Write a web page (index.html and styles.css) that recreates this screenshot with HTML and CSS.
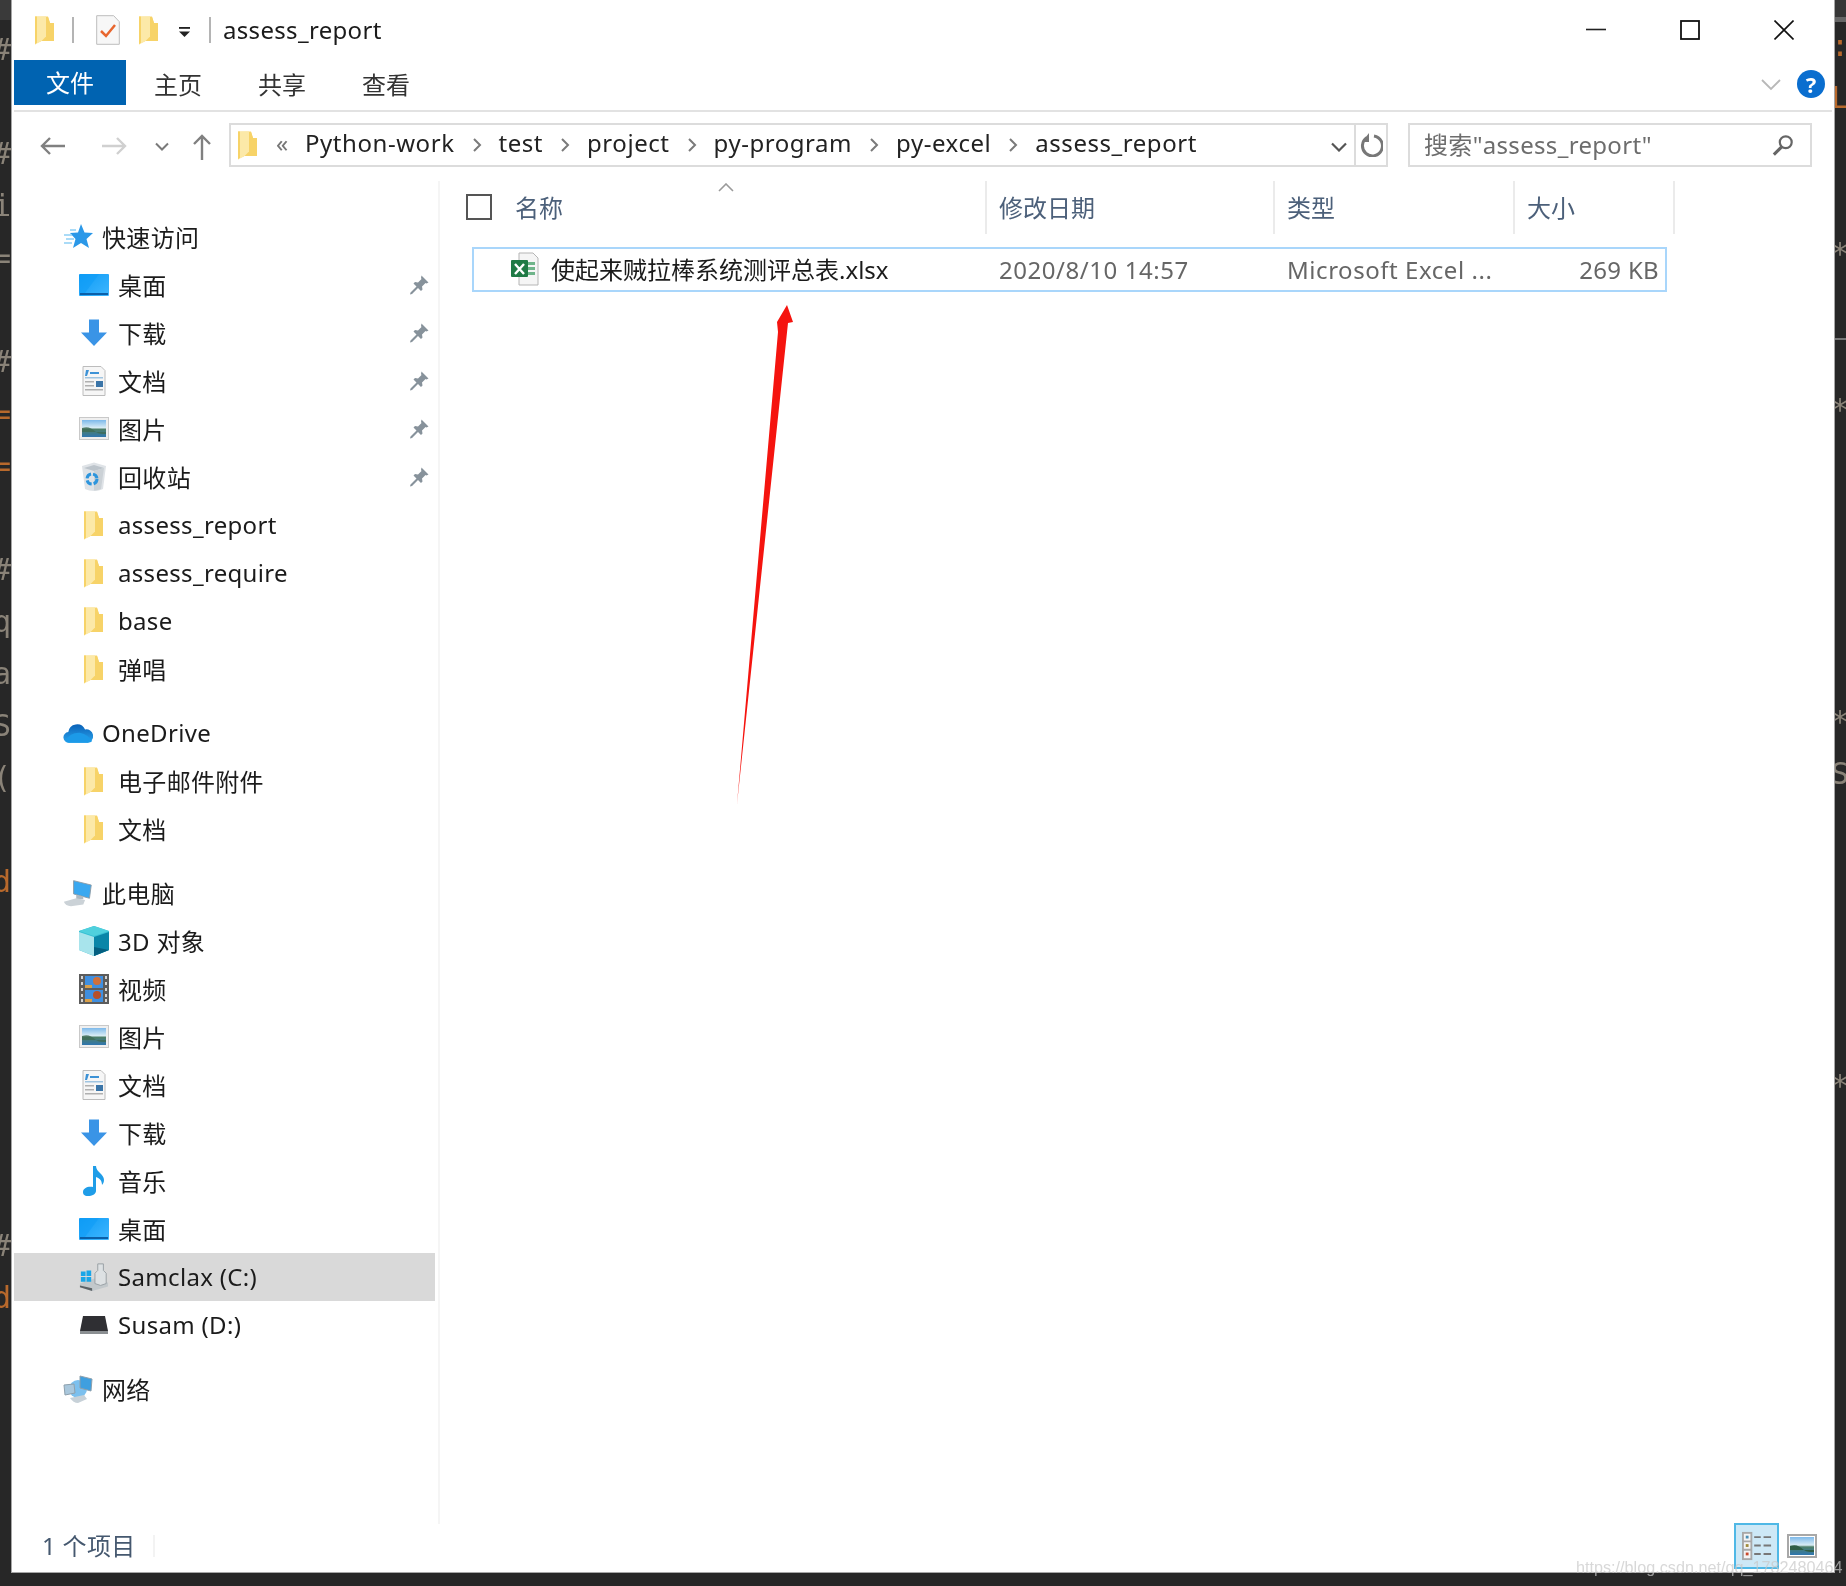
FILE: index.html
```html
<!DOCTYPE html>
<html lang="zh-CN">
<head>
<meta charset="utf-8">
<title>assess_report</title>
<link rel="stylesheet" href="styles.css">
</head>
<body>
<svg class="sprite" width="0" height="0" aria-hidden="true">
  <defs>
    <linearGradient id="gFolder" x1="0" x2="1" y1="0" y2="0"><stop offset="0" stop-color="#fbe39a"/><stop offset="1" stop-color="#f6cf62"/></linearGradient>
    <linearGradient id="gDesk" x1="0" x2="1" y1="0" y2="1"><stop offset="0" stop-color="#0d9bf5"/><stop offset="1" stop-color="#3fb6ff"/></linearGradient>
    <linearGradient id="gSky" x1="0" x2="0" y1="0" y2="1"><stop offset="0" stop-color="#7db9ea"/><stop offset=".45" stop-color="#d8ecf5"/><stop offset=".55" stop-color="#4d7f68"/><stop offset="1" stop-color="#2f76b0"/></linearGradient>
    <linearGradient id="gCloud" x1="0" x2="0" y1="0" y2="1"><stop offset="0" stop-color="#0a62b8"/><stop offset="1" stop-color="#2aa3ec"/></linearGradient>
    <symbol id="folder" viewBox="0 0 30 30">
      <path d="M5 1.500h13l2 6.500h3v18H11l-6 3z" fill="url(#gFolder)"/>
      <path d="M16 2h2l2 6h4v18H11l5-5z" fill="#f7d368"/>
      <path d="M5 1.500h11v20l-5 5-6 3z" fill="#fce9a8"/>
      <path d="M5 1.500h2v26l-2 2z" fill="#f7d368"/>
    </symbol>
    <symbol id="desk" viewBox="0 0 30 30">
      <rect x="0" y="4" width="30" height="22" rx="1" fill="url(#gDesk)"/>
      <rect x="1" y="23" width="28" height="2" fill="#0b5fa8"/>
      <path d="M20 4 L6 23h-5V4z" fill="#0f9cf6" opacity=".6"/>
    </symbol>
    <symbol id="down" viewBox="0 0 30 30">
      <path d="M10 1.500h10v13h8L15 28 2 14.500h8z" fill="#3a94e6"/>
    </symbol>
    <symbol id="doc" viewBox="0 0 30 30">
      <path d="M4 .5h18l4 4v25H4z" fill="#f6f6f6" stroke="#bcbcbc"/>
      <path d="M7 4h3l-2 6H6zM11 6h9v2h-9z" fill="#3d92d6"/>
      <rect x="6" y="11" width="18" height="1.500" fill="#9fc4e0"/>
      <path d="M6 15h9v1.500H6zM6 19h9v1.500H6zM6 23h18v1.500H6z" fill="#b0b0b0"/>
      <rect x="17" y="15" width="7" height="6" fill="#3b75a8"/>
    </symbol>
    <symbol id="pic" viewBox="0 0 30 30">
      <rect x=".5" y="3.500" width="29" height="22" fill="#efefef" stroke="#c9c9c9"/>
      <rect x="3" y="6" width="24" height="17" fill="url(#gSky)"/>
      <path d="M3 14c6-2 9 0 14 4 3 2 6 2 10 2v-2H3z" fill="#3f6b55" opacity=".8"/>
    </symbol>
    <symbol id="bin" viewBox="0 0 30 30">
      <path d="M3 4 15 .5 27 4l-3 23c-5 2.500-13 2.500-18 0z" fill="#dfe3e7"/>
      <path d="M5 6 15 3l10 3-10 3z" fill="#bcc4cb"/>
      <path d="M15 9l10-3-3 21c-3 1.500-5 1.500-7 1.500z" fill="#cbd1d6"/>
      <circle cx="13" cy="17" r="5" fill="none" stroke="#2c95dd" stroke-width="3" stroke-dasharray="6 2"/>
    </symbol>
    <symbol id="star" viewBox="0 0 30 30">
      <path d="M18 2l3.500 8.500 8.500.5-6.500 6 2.500 9-8-5-8 5 2.500-9-5.500-6 8-.5z" fill="#2b98e8"/>
      <path d="M1 13h8M3 17h8M1 21h8M7 8h6" stroke="#8fd0f5" stroke-width="1.500"/>
    </symbol>
    <symbol id="cloud" viewBox="0 0 34 30">
      <path d="M7 26a6 6 0 0 1-1-12 10 10 0 0 1 19-3 7.500 7.500 0 0 1 3 15z" fill="url(#gCloud)"/>
      <path d="M3 23c3-5 10-9 17-8 5 1 10 4 13 9-1 1-3 2-5 2H7c-2 0-3-1-4-3z" fill="#1c9ae8"/>
    </symbol>
    <symbol id="pc" viewBox="0 0 34 30">
      <path d="M12 1l20 5-2 15-18-5z" fill="#3aa8f0" stroke="#8b99a3"/>
      <path d="M15 17l8 2v3h-8z" fill="#aeb9c1"/>
      <path d="M1 25l14-4 10 2-2 5-14 2c-4 0-7-2-8-5z" fill="#cbd2d7"/>
    </symbol>
    <symbol id="cube" viewBox="0 0 30 30">
      <path d="M15 0 30 5v19l-15 6L0 24V5z" fill="#37bfd3"/>
      <path d="M0 6l15 5v19L0 24z" fill="#a8e4ec"/>
      <path d="M15 11 30 6v18l-15 6z" fill="#0a86a8"/>
      <path d="M15 21l15 3-15 6z" fill="#045f80"/>
      <path d="M15 0 30 5 15 10 0 5z" fill="#4fd0dd"/>
    </symbol>
    <symbol id="film" viewBox="0 0 30 30">
      <rect y="0" width="30" height="30" fill="#5c5c5c"/>
      <rect x="6" y="2" width="18" height="12" fill="#3f8fe0"/>
      <rect x="6" y="16" width="18" height="12" fill="#3f8fe0"/>
      <circle cx="18" cy="7" r="4" fill="#d0703a"/>
      <circle cx="18" cy="21" r="4" fill="#b8502a"/>
      <path d="M6 11h7v3H6zM6 25h7v3H6z" fill="#d9a04a"/>
      <path d="M2 2h2v3H2zM2 8h2v3H2zM2 14h2v3H2zM2 20h2v3H2zM2 25h2v3H2zM26 2h2v3h-2zM26 8h2v3h-2zM26 14h2v3h-2zM26 20h2v3h-2zM26 25h2v3h-2z" fill="#d5d5d5"/>
    </symbol>
    <symbol id="note" viewBox="0 0 30 30">
      <path d="M14 0h3c0 6 8 8 8 14 0 2-1 4-2 5 0-5-3-7-6-8v14c0 3-4 5-8 5s-5-2-5-4c0-4 5-6 10-5z" fill="#1f9de8"/>
    </symbol>
    <symbol id="cdrive" viewBox="0 0 32 30">
      <path d="M1 22l17-6 13 5v4L14 30 1 26z" fill="#c2c8cb"/>
      <path d="M1 24l13 3v3L1 26z" fill="#5c6266"/>
      <path d="M2 9h5v5H2zM8 8h5v6H8zM2 15h5v5H2zM8 15h5v5H8z" fill="#19a6e8"/>
      <path d="M20 1h6v7l3 3v11l-6 2-6-2V11l3-3z" fill="#dde1e3" stroke="#989fa3"/>
    </symbol>
    <symbol id="ddrive" viewBox="0 0 30 30">
      <path d="M4 6h22l3 15H1z" fill="#2f2f33"/>
      <path d="M1 21h28v3H1z" fill="#8b8f92"/>
    </symbol>
    <symbol id="net" viewBox="0 0 30 30">
      <circle cx="15" cy="15" r="9" fill="#7cc0ee"/>
      <path d="M17 2l12 3-1 12-11-3z" fill="#3f9fdf" stroke="#8da0ad"/>
      <path d="M1 11l10-1 1 9-10 2z" fill="#a9c7dc" stroke="#8da0ad"/>
      <path d="M7 24l14-3 3 4-9 4c-3 0-6-2-8-5z" fill="#c7d1d8"/>
    </symbol>
    <symbol id="pin" viewBox="0 0 20 20">
      <path d="M12.500 .5l7 7-2 1-1-.5-3.500 3.500.5 3-1.500 1.500-3-3L3 19l-2 .5.5-2 6-6-3-3L6 7l3 .5L12.500 4l-.5-1z" fill="#87929b"/>
    </symbol>
  </defs>
</svg>

<aside class="strip strip-left">
<pre class="code"><span class="g">#</span>

<span class="g">#</span>
<span class="g">i</span>
<span class="g">=</span>

<span class="g">#</span>
<span class="o">=</span>
<span class="o">=</span>

<span class="g">#</span>
<span class="g">q</span>
<span class="g">a</span>
<span class="g">S</span>
<span class="g">(</span>

<span class="o">d</span>






<span class="g">#</span>
<span class="o">d</span></pre>
</aside>

<main class="window">
  <header class="titlebar">
    <svg class="qa qa-folder"><use href="#folder"/></svg>
    <span class="vsep"></span>
    <svg class="qa qa-check" viewBox="0 0 24 30"><path d="M.7.7h17l5.600 6v22.600H.7z" fill="#f7f7f7" stroke="#bdbdbd"/><path d="M5 16l5 5 9-11" fill="none" stroke="#e8662e" stroke-width="2.500"/></svg>
    <svg class="qa qa-folder2"><use href="#folder"/></svg>
    <svg class="qa qa-drop" viewBox="0 0 14 12"><path d="M1 1h12" stroke="#222" stroke-width="2"/><path d="M1 5h12L7 11z" fill="#222"/></svg>
    <span class="vsep vsep-b"></span>
    <span class="wintitle">assess_report</span>
    <div class="winctl">
      <svg class="ctl" viewBox="0 0 20 20"><path d="M0 9.500h20" stroke="#222" stroke-width="1.600"/></svg>
      <svg class="ctl" viewBox="0 0 20 20"><rect x="1" y="1" width="18" height="18" fill="none" stroke="#111" stroke-width="1.800"/></svg>
      <svg class="ctl" viewBox="0 0 20 20"><path d="M.5.5l19 19M19.500.5l-19 19" stroke="#111" stroke-width="1.600"/></svg>
    </div>
  </header>

  <nav class="ribbon">
    <span class="tab tab-file">文件</span>
    <span class="tab">主页</span>
    <span class="tab">共享</span>
    <span class="tab">查看</span>
    <svg class="rib-chev" viewBox="0 0 20 12"><path d="M1 1l9 9 9-9" fill="none" stroke="#b8b8b8" stroke-width="1.800"/></svg>
    <span class="help">?</span>
  </nav>

  <section class="toolbar">
    <svg class="nav nav-back" viewBox="0 0 26 20"><path d="M25 10H2M10 2l-8 8 8 8" fill="none" stroke="#808080" stroke-width="2.400"/></svg>
    <svg class="nav nav-fwd" viewBox="0 0 26 20"><path d="M1 10h23M16 2l8 8-8 8" fill="none" stroke="#d0d0d0" stroke-width="2.400"/></svg>
    <svg class="nav nav-hist" viewBox="0 0 14 10"><path d="M1 1.500l6 6 6-6" fill="none" stroke="#7a7a7a" stroke-width="2"/></svg>
    <svg class="nav nav-up" viewBox="0 0 20 26"><path d="M10 26V2M2 10l8-8 8 8" fill="none" stroke="#808080" stroke-width="2.400"/></svg>
    <div class="addr">
      <svg class="addr-folder"><use href="#folder"/></svg>
      <span class="more">«</span>
      <span class="crumb">Python-work</span><svg class="chev" viewBox="0 0 10 16"><path d="M2 2l6 6-6 6" fill="none" stroke="#7a7a7a" stroke-width="2"/></svg>
      <span class="crumb">test</span><svg class="chev" viewBox="0 0 10 16"><path d="M2 2l6 6-6 6" fill="none" stroke="#7a7a7a" stroke-width="2"/></svg>
      <span class="crumb">project</span><svg class="chev" viewBox="0 0 10 16"><path d="M2 2l6 6-6 6" fill="none" stroke="#7a7a7a" stroke-width="2"/></svg>
      <span class="crumb">py-program</span><svg class="chev" viewBox="0 0 10 16"><path d="M2 2l6 6-6 6" fill="none" stroke="#7a7a7a" stroke-width="2"/></svg>
      <span class="crumb">py-excel</span><svg class="chev" viewBox="0 0 10 16"><path d="M2 2l6 6-6 6" fill="none" stroke="#7a7a7a" stroke-width="2"/></svg>
      <span class="crumb">assess_report</span>
      <svg class="addr-drop" viewBox="0 0 16 10"><path d="M1 1.500l7 7 7-7" fill="none" stroke="#555" stroke-width="2.200"/></svg>
      <span class="addr-refresh"><svg viewBox="0 0 24 24"><path d="M8 4.500A10 10 0 1 0 15 3" fill="none" stroke="#777" stroke-width="3"/><path d="M10 0v9H3z" fill="#777"/></svg></span>
    </div>
    <div class="search">
      <span>搜索"assess_report"</span>
      <svg viewBox="0 0 24 24"><circle cx="15" cy="9" r="6.500" fill="none" stroke="#666" stroke-width="2.400"/><path d="M10.500 14 2 22.500" stroke="#666" stroke-width="3.400"/></svg>
    </div>
  </section>

  <div class="main">
    <div class="sidebar">
      <div class="group">
        <div class="row head"><svg class="ico"><use href="#star"/></svg><span>快速访问</span></div>
        <div class="row"><svg class="ico"><use href="#desk"/></svg><span>桌面</span><svg class="pin"><use href="#pin"/></svg></div>
        <div class="row"><svg class="ico"><use href="#down"/></svg><span>下载</span><svg class="pin"><use href="#pin"/></svg></div>
        <div class="row"><svg class="ico"><use href="#doc"/></svg><span>文档</span><svg class="pin"><use href="#pin"/></svg></div>
        <div class="row"><svg class="ico"><use href="#pic"/></svg><span>图片</span><svg class="pin"><use href="#pin"/></svg></div>
        <div class="row"><svg class="ico"><use href="#bin"/></svg><span>回收站</span><svg class="pin"><use href="#pin"/></svg></div>
        <div class="row"><svg class="ico"><use href="#folder"/></svg><span>assess_report</span></div>
        <div class="row"><svg class="ico"><use href="#folder"/></svg><span>assess_require</span></div>
        <div class="row"><svg class="ico"><use href="#folder"/></svg><span>base</span></div>
        <div class="row"><svg class="ico"><use href="#folder"/></svg><span>弹唱</span></div>
      </div>
      <div class="group">
        <div class="row head"><svg class="ico"><use href="#cloud"/></svg><span>OneDrive</span></div>
        <div class="row"><svg class="ico"><use href="#folder"/></svg><span>电子邮件附件</span></div>
        <div class="row"><svg class="ico"><use href="#folder"/></svg><span>文档</span></div>
      </div>
      <div class="group">
        <div class="row head"><svg class="ico"><use href="#pc"/></svg><span>此电脑</span></div>
        <div class="row"><svg class="ico"><use href="#cube"/></svg><span>3D 对象</span></div>
        <div class="row"><svg class="ico"><use href="#film"/></svg><span>视频</span></div>
        <div class="row"><svg class="ico"><use href="#pic"/></svg><span>图片</span></div>
        <div class="row"><svg class="ico"><use href="#doc"/></svg><span>文档</span></div>
        <div class="row"><svg class="ico"><use href="#down"/></svg><span>下载</span></div>
        <div class="row"><svg class="ico"><use href="#note"/></svg><span>音乐</span></div>
        <div class="row"><svg class="ico"><use href="#desk"/></svg><span>桌面</span></div>
        <div class="row selected"><svg class="ico"><use href="#cdrive"/></svg><span>Samclax (C:)</span></div>
        <div class="row"><svg class="ico"><use href="#ddrive"/></svg><span>Susam (D:)</span></div>
      </div>
      <div class="group">
        <div class="row head"><svg class="ico"><use href="#net"/></svg><span>网络</span></div>
      </div>
    </div>

    <div class="list">
      <div class="listhead">
        <div class="hcell hname">
          <span class="check"></span>
          <span>名称</span>
          <svg class="sortcaret" viewBox="0 0 16 9"><path d="M1 8l7-7 7 7" fill="none" stroke="#9a9a9a" stroke-width="1.600"/></svg>
        </div>
        <div class="hcell">修改日期</div>
        <div class="hcell">类型</div>
        <div class="hcell">大小</div>
      </div>
      <div class="filerow">
        <div class="fname">
          <svg class="xl" viewBox="0 0 28 34">
            <path d="M8 1h14l5 5v27H8z" fill="#f5f5f5" stroke="#b5b5b5"/>
            <path d="M17 10h7v3h-7zM17 15h7v3h-7zM17 20h7v3h-7z" fill="#6fb48a"/>
            <rect x="0" y="8" width="17" height="17" rx="1" fill="#1f7a45"/>
            <path d="M4 12l9 10M13 12l-9 10" stroke="#fff" stroke-width="2.400"/>
          </svg>
          <span>使起来贼拉棒系统测评总表.xlsx</span>
        </div>
        <div class="fcell">2020/8/10 14:57</div>
        <div class="fcell">Microsoft Excel ...</div>
        <div class="fcell fsize">269 KB</div>
      </div>
    </div>
  </div>

  <footer class="status">
    <span class="count">1 个项目</span>
    <span class="statsep"></span>
    <span class="viewbtn active">
      <svg viewBox="0 0 32 32">
        <rect x="1" y="2" width="9" height="28" fill="#f4f4f4" stroke="#a8a8a8" stroke-width="2"/>
        <path d="M1 11h9M1 20h9" stroke="#a8a8a8" stroke-width="2"/>
        <rect x="4" y="5" width="3" height="3" fill="#4a8fb5"/><rect x="4" y="14" width="3" height="3" fill="#a08a3a"/><rect x="4" y="23" width="3" height="3" fill="#c9482a"/>
        <path d="M13 6.500h7M23 6.500h8M13 15.500h7M23 15.500h8M13 24.500h7M23 24.500h8" stroke="#777" stroke-width="2"/>
      </svg>
    </span>
    <span class="viewbtn">
      <svg viewBox="0 0 30 24">
        <rect x="1" y="1" width="28" height="22" fill="#fff" stroke="#a8a8a8" stroke-width="2"/>
        <rect x="3" y="3" width="24" height="18" fill="url(#gSky)"/>
        <path d="M3 12c6-2 9 0 14 4 3 2 6 2 10 2v-2H3z" fill="#2f5e46"/>
      </svg>
    </span>
  </footer>
</main>

<aside class="strip strip-right">
<pre class="code code-r"><span class="o">:</span>
<span class="o">L</span>


<span class="g">*</span>


<span class="g">*</span>





<span class="g">*</span>
<span class="g">S</span>





<span class="g">*</span></pre>
</aside>

<svg class="redarrow" viewBox="0 0 70 510">
  <path d="M1 501 42 29 41 19 51 2 57 19 52 20z" fill="#f5140f"/>
</svg>
<span class="watermark">https://blog.csdn.net/qq_1782480464</span>
</body>
</html>
```
FILE: styles.css
```css
* { box-sizing: border-box; }
html, body { margin: 0; padding: 0; }
body {
  position: relative;
  width: 1846px;
  height: 1586px;
  display: flex;
  align-items: flex-start;
  background: #272727;
  overflow: hidden;
  font-family: "Noto Sans", "Noto Sans CJK SC", sans-serif;
  font-size: 24px;
  letter-spacing: .32px;
  color: #1b1b1b;
}
.sprite { position: absolute; }

.strip { width: 11px; height: 1586px; overflow: hidden; flex: none; }
.strip-left { background: linear-gradient(#3a3a3a 20px, transparent 20px); }
.strip-right { background: linear-gradient(#363636 17px, #666 17px, #666 22px, transparent 22px, transparent 338px, #777 338px, #777 340px, transparent 340px); }
.code {
  margin: 24px 0 0 -7px;
  font-family: "DejaVu Sans Mono", monospace;
  font-size: 30px;
  line-height: 52px;
  filter: blur(.7px);
}
.code-r { margin: 20px 0 0 -4px; }
.g { color: #8a8378; }
.o { color: #b8692c; }

.window {
  width: 1824px;
  height: 1573px;
  flex: none;
  display: flex;
  flex-direction: column;
  background: #fff;
  border: solid #a6a6a6;
  border-width: 0 1px 1px;
  filter: blur(.45px);
}

/* title bar */
.titlebar { height: 60px; flex: none; display: flex; align-items: center; padding-left: 18px; }
.qa { flex: none; }
.qa-folder { width: 30px; height: 30px; margin-right: 12px; }
.vsep { width: 2px; height: 26px; background: #b4b4b4; margin-right: 22px; }
.vsep-b { margin-right: 12px; margin-left: 18px; }
.qa-check { width: 24px; height: 30px; margin-right: 14px; }
.qa-folder2 { width: 30px; height: 30px; margin-right: 14px; }
.qa-drop { width: 13px; height: 11px; margin-top: 4px; }
.wintitle { margin-bottom: 1px; }
.winctl { margin-left: auto; display: flex; gap: 74px; padding-right: 40px; }
.ctl { width: 20px; height: 20px; }

/* ribbon */
.ribbon {
  height: 52px;
  flex: none;
  display: flex;
  align-items: flex-start;
  margin: 0 2px;
  padding: 0 7px 5px 0;
  border-bottom: 2px solid #e2e2e2;
}
.tab { width: 104px; height: 45px; line-height: 50px; text-align: center; color: #333; flex: none; letter-spacing: 0; }
.tab-file { width: 112px; background: #0063b1; color: #fff; line-height: 45px; }
.rib-chev { width: 20px; height: 12px; margin: 19px 0 0 auto; }
.help {
  width: 28px; height: 28px; margin: 10px 0 0 16px;
  border-radius: 50%;
  background: #0a6ecf;
  color: #fff;
  font-size: 22px;
  font-weight: 700;
  line-height: 28px;
  text-align: center;
  letter-spacing: 0;
}

/* toolbar */
.toolbar { height: 69px; flex: none; display: flex; align-items: flex-start; padding-top: 11px; }
.nav { flex: none; }
.nav-back { width: 26px; height: 20px; margin: 13px 0 0 28px; }
.nav-fwd { width: 26px; height: 20px; margin: 13px 0 0 35px; }
.nav-hist { width: 14px; height: 10px; margin: 19px 0 0 28px; }
.nav-up { width: 20px; height: 26px; margin: 11px 0 0 23px; }
.addr {
  width: 1159px; height: 44px; margin-left: 17px;
  display: flex; align-items: center;
  border: 2px solid #dcdcdc;
  color: #222;
}
.addr-folder { width: 30px; height: 30px; flex: none; margin-left: 2px; }
.more { color: #777; width: 16px; margin: -4px 13px 0 13px; line-height: 1; }
.crumb { flex: none; margin-bottom: 5px; letter-spacing: .55px; }
.chev { width: 10px; height: 16px; margin: 0 17px; flex: none; }
.addr-drop { width: 16px; height: 10px; margin: 4px 7px 0 auto; flex: none; }
.addr-refresh {
  width: 32px; height: 40px; flex: none;
  border-left: 2px solid #dcdcdc;
  display: flex; align-items: center; justify-content: center;
}
.addr-refresh svg { width: 24px; height: 24px; }
.search {
  width: 404px; height: 44px; margin-left: 20px;
  padding: 0 16px 0 14px;
  display: flex; align-items: center; justify-content: space-between;
  border: 2px solid #dcdcdc;
  color: #6d6d6d;
}
.search span { margin-bottom: 3px; }
.search svg { width: 22px; height: 22px; }

/* main */
.main { flex: 1; min-height: 0; display: flex; }
.sidebar { width: 428px; flex: none; padding: 32px 3px 0 2px; border-right: 2px solid #f5f5f5; }
.group + .group { margin-top: 16px; }
.row { height: 48px; display: flex; align-items: center; gap: 9px; padding-left: 65px; }
.row > span { margin-bottom: 1px; }
.head { padding-left: 49px; }
.selected { background: #d9d9d9; }
.ico { width: 30px; height: 30px; flex: none; }
.pin { width: 20px; height: 20px; margin-left: auto; margin-right: 6px; flex: none; }

.list { flex: 1; min-width: 0; }
.listhead {
  height: 53px;
  display: grid;
  grid-template-columns: 547px 288px 240px 160px;
  color: #4c607a;
  letter-spacing: 0;
}
.hcell { border-right: 2px solid #ebebeb; padding: 0 0 2px 12px; display: flex; align-items: center; }
.hname { position: relative; padding-left: 26px; gap: 23px; }
.check { width: 26px; height: 26px; border: 2px solid #555; flex: none; }
.sortcaret { position: absolute; left: 278px; top: 2px; width: 16px; height: 9px; }

.filerow {
  width: 1195px; height: 45px; margin: 13px 0 0 32px;
  display: grid;
  grid-template-columns: 514px 288px 240px 149px;
  align-items: center;
  border: 2px solid #a9d6fb;
}
.fname { display: flex; align-items: center; gap: 12px; padding-left: 37px; letter-spacing: 0; }
.fname span { margin-bottom: 2px; }
.xl { width: 28px; height: 34px; flex: none; margin-top: -2px; }
.fcell { color: #666; padding-left: 11px; white-space: nowrap; letter-spacing: .55px; }
.fsize { text-align: right; padding-right: 6px; letter-spacing: .32px; }

/* status */
.status { height: 48px; flex: none; display: flex; align-items: flex-start; padding-left: 30px; color: #45586f; }
.count { margin-top: 6px; line-height: 32px; }
.statsep { width: 2px; height: 22px; background: #f3f3f3; margin: 11px 0 0 17px; }
.viewbtn { width: 45px; height: 46px; display: flex; align-items: center; justify-content: center; margin-top: -1px; flex: none; }
.viewbtn svg { width: 30px; height: 24px; }
.viewbtn.active { margin-left: auto; margin-right: 8px; background: #cde8f6; border: 2px solid #4fb8e6; }
.viewbtn.active svg { width: 30px; height: 30px; }
.viewbtn:last-child { width: 30px; margin-right: 17px; }

.redarrow { position: absolute; left: 736px; top: 303px; width: 70px; height: 510px; }
.watermark {
  position: absolute; left: 1576px; top: 1558px;
  font-family: "Liberation Sans", sans-serif;
  font-size: 16.200px;
  letter-spacing: 0;
  color: rgba(200, 200, 200, .7);
  white-space: nowrap;
  filter: blur(.5px);
}
```
